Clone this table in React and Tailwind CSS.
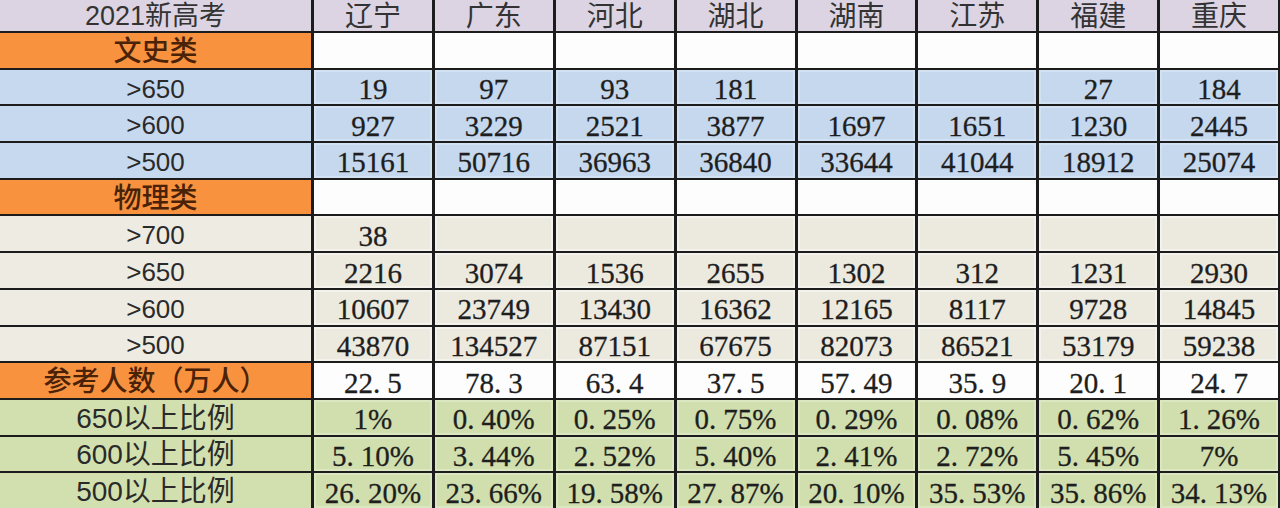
import React from 'react';

const PROVINCES = ['辽宁', '广东', '河北', '湖北', '湖南', '江苏', '福建', '重庆'];

// kind picks the row colours: label cell / data cells
const ROWS = [
  { label: '文史类', kind: 'cat', values: ['', '', '', '', '', '', '', ''] },
  { label: '>650', kind: 'blue', values: ['19', '97', '93', '181', '', '', '27', '184'] },
  { label: '>600', kind: 'blue', values: ['927', '3229', '2521', '3877', '1697', '1651', '1230', '2445'] },
  { label: '>500', kind: 'blue', values: ['15161', '50716', '36963', '36840', '33644', '41044', '18912', '25074'] },
  { label: '物理类', kind: 'cat', values: ['', '', '', '', '', '', '', ''] },
  { label: '>700', kind: 'tan', values: ['38', '', '', '', '', '', '', ''] },
  { label: '>650', kind: 'tan', values: ['2216', '3074', '1536', '2655', '1302', '312', '1231', '2930'] },
  { label: '>600', kind: 'tan', values: ['10607', '23749', '13430', '16362', '12165', '8117', '9728', '14845'] },
  { label: '>500', kind: 'tan', values: ['43870', '134527', '87151', '67675', '82073', '86521', '53179', '59238'] },
  { label: '参考人数（万人）', kind: 'cat', values: ['22.5', '78.3', '63.4', '37.5', '57.49', '35.9', '20.1', '24.7'] },
  { label: '650以上比例', kind: 'green', values: ['1%', '0.40%', '0.25%', '0.75%', '0.29%', '0.08%', '0.62%', '1.26%'] },
  { label: '600以上比例', kind: 'green', values: ['5.10%', '3.44%', '2.52%', '5.40%', '2.41%', '2.72%', '5.45%', '7%'] },
  { label: '500以上比例', kind: 'green', values: ['26.20%', '23.66%', '19.58%', '27.87%', '20.10%', '35.53%', '35.86%', '34.13%'] },
];

const LABEL_BG = {
  cat: 'bg-[#f8923f] text-[#4a2208] font-medium text-[28px]',
  blue: 'bg-[#c7d9ef] text-[#2a2a2a] text-[26px]',
  tan: 'bg-[#eeebe2] text-[#2a2a2a] text-[26px]',
  green: 'bg-[#d2e0b0] text-[#2a2a2a] text-[28px]',
};

// outer = lighter edge, inner = cell fill (the screenshot shows a soft inset)
const CELL_BG = {
  cat: 'bg-[#fdfdfd]',
  blue: 'bg-[#d3e2f3]',
  tan: 'bg-[#f4f2ec]',
  green: 'bg-[#dbe7c0]',
};

const INNER_BG = {
  cat: 'bg-[#fdfdfd]',
  blue: 'bg-[#c5d8ee]',
  tan: 'bg-[#ece9df]',
  green: 'bg-[#d0dfad]',
};

// SimSun style wide period: "22. 5"
function Num({ text }) {
  const i = text.indexOf('.');
  if (i < 0) return text;
  return (
    <>
      {text.slice(0, i)}
      <span className="mr-[7px]">.</span>
      {text.slice(i + 1)}
    </>
  );
}

export default function App() {
  return (
    <div className="h-[508px] w-[1280px] overflow-hidden bg-[#1c1c1c] pr-[2px]">
      <div className="grid h-full grid-cols-[311px_repeat(8,minmax(0,1fr))] grid-rows-[31px_repeat(13,minmax(0,1fr))] gap-x-[3px] gap-y-[2px]">
        {/* Header */}
        <div className="flex items-center justify-center bg-[#ddd4e3] font-['Liberation_Sans','Noto_Sans_CJK_SC',sans-serif] text-[27px] leading-[28px] text-[#333]">
          2021新高考
        </div>
        {PROVINCES.map((p) => (
          <div
            key={p}
            className="flex items-center justify-center pt-[2px] bg-[#ddd4e3] font-['Liberation_Sans','Noto_Sans_CJK_SC',sans-serif] text-[28px] leading-[28px] text-[#333]"
          >
            {p}
          </div>
        ))}

        {ROWS.map((row, r) => (
          <React.Fragment key={r}>
            <div
              className={`flex items-center justify-center pt-[3px] font-['Liberation_Sans','Noto_Sans_CJK_SC',sans-serif] leading-[30px] ${LABEL_BG[row.kind]}`}
            >
              {row.label}
            </div>
            {row.values.map((v, c) => (
              <div key={c} className={`flex p-[2px] ${CELL_BG[row.kind]}`}>
                <div
                  className={`flex flex-1 items-center justify-center pt-[4px] font-['Liberation_Serif','Noto_Sans_CJK_SC',serif] text-[29px] leading-[28px] text-[#1e1e1e] [-webkit-text-stroke:0.3px_#1e1e1e] ${INNER_BG[row.kind]}`}
                >
                  <Num text={v} />
                </div>
              </div>
            ))}
          </React.Fragment>
        ))}
      </div>
    </div>
  );
}
